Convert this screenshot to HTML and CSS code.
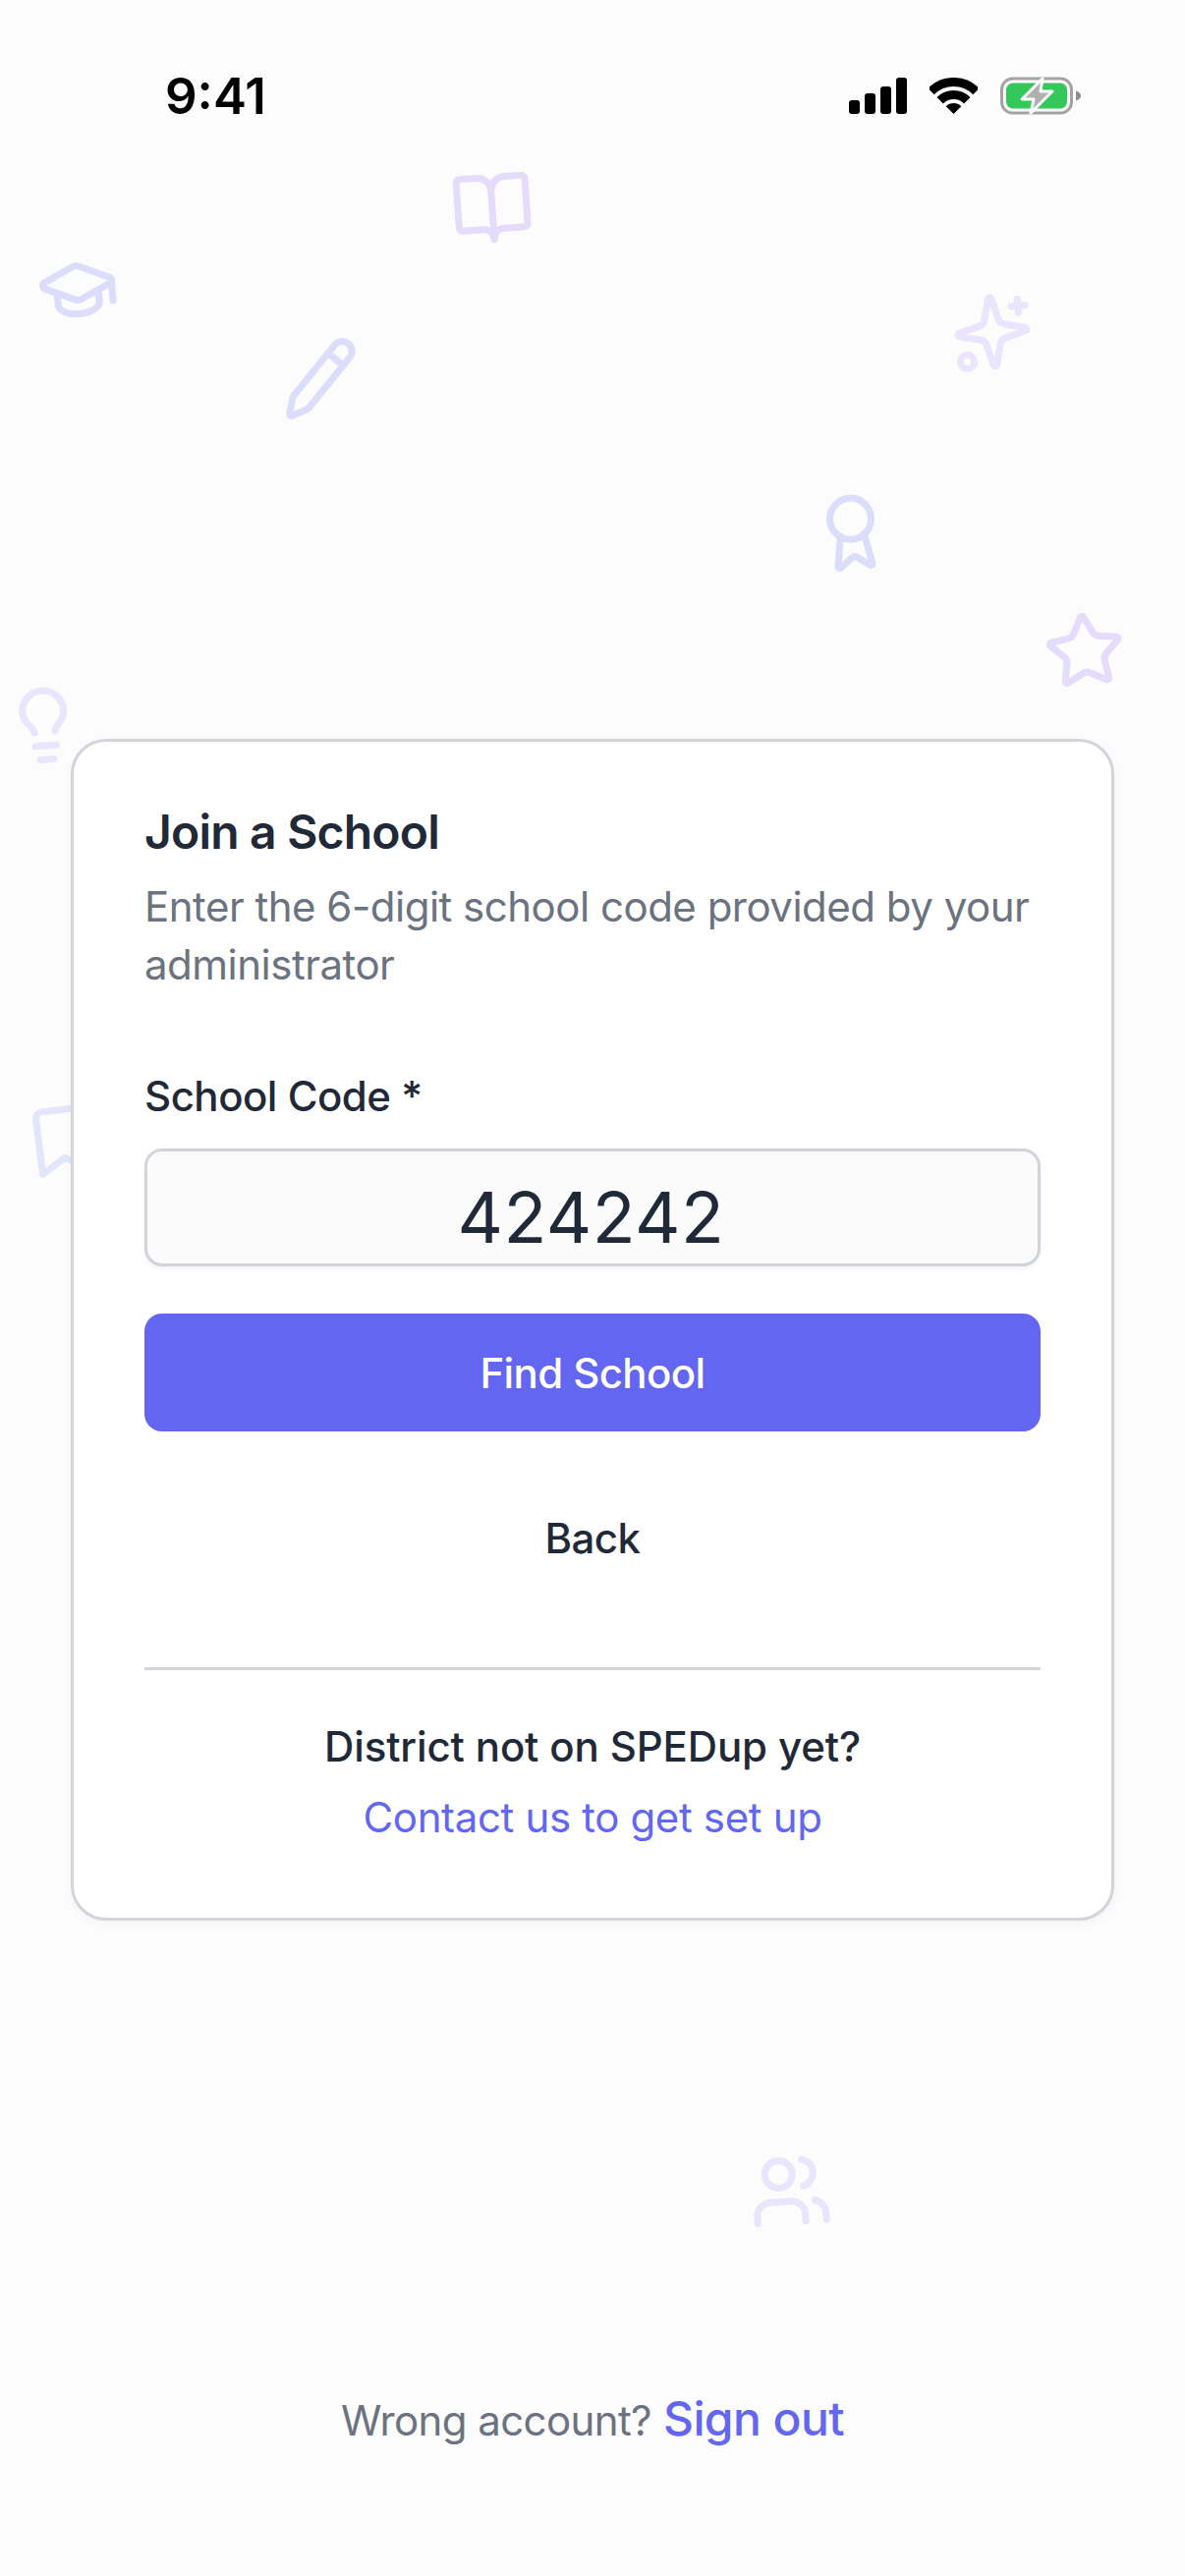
FILE: index.html
```html
<!DOCTYPE html>
<html lang="en">
<head>
    <meta charset="UTF-8">
    <meta name="viewport" content="width=device-width, initial-scale=1.0">
    <title>SPEDup - Join a School</title>
    <link rel="stylesheet" href="styles.css">
</head>
<body>
    <div class="screen">
        <!-- floating background icons -->
        <div class="doodles">
            <svg class="doodle doodle-cap" viewBox="0 0 24 24"><path d="M21.42 10.922a1 1 0 0 0-.019-1.838L12.83 5.18a2 2 0 0 0-1.66 0L2.6 9.08a1 1 0 0 0 0 1.832l8.57 3.908a2 2 0 0 0 1.66 0z"/><path d="M22 10v6"/><path d="M6 12.5V16a6 3 0 0 0 12 0v-3.5"/></svg>
            <svg class="doodle doodle-book" viewBox="0 0 24 24"><path d="M12 7v14"/><path d="M3 18a1 1 0 0 1-1-1V4a1 1 0 0 1 1-1h5a4 4 0 0 1 4 4 4 4 0 0 1 4-4h5a1 1 0 0 1 1 1v13a1 1 0 0 1-1 1h-6a3 3 0 0 0-3 3 3 3 0 0 0-3-3z"/></svg>
            <svg class="doodle doodle-pencil" viewBox="0 0 24 24"><path d="M21.174 6.812a1 1 0 0 0-3.986-3.987L3.842 16.174a2 2 0 0 0-.5.83l-1.321 4.352a.5.5 0 0 0 .623.622l4.353-1.32a2 2 0 0 0 .83-.497z"/><path d="m15 5 4 4"/></svg>
            <svg class="doodle doodle-sparkles" viewBox="0 0 24 24"><path d="M9.937 15.5A2 2 0 0 0 8.5 14.063l-6.135-1.582a.5.5 0 0 1 0-.962L8.5 9.936A2 2 0 0 0 9.937 8.5l1.582-6.135a.5.5 0 0 1 .963 0L14.063 8.5A2 2 0 0 0 15.5 9.937l6.135 1.581a.5.5 0 0 1 0 .964L15.5 14.063a2 2 0 0 0-1.437 1.437l-1.582 6.135a.5.5 0 0 1-.963 0z"/><path d="M20 3v4"/><path d="M22 5h-4"/><circle cx="4" cy="20" r="2"/></svg>
            <svg class="doodle doodle-award" viewBox="0 0 24 24"><path d="m15.477 12.89 1.515 8.526a.5.5 0 0 1-.81.47l-3.58-2.687a1 1 0 0 0-1.197 0l-3.586 2.686a.5.5 0 0 1-.81-.469l1.514-8.526"/><circle cx="12" cy="8" r="6"/></svg>
            <svg class="doodle doodle-star" viewBox="0 0 24 24"><path d="M11.525 2.295a.53.53 0 0 1 .95 0l2.31 4.679a2.123 2.123 0 0 0 1.595 1.16l5.166.756a.53.53 0 0 1 .294.904l-3.736 3.638a2.123 2.123 0 0 0-.611 1.878l.882 5.14a.53.53 0 0 1-.771.56l-4.618-2.428a2.122 2.122 0 0 0-1.973 0L6.396 21.01a.53.53 0 0 1-.77-.56l.881-5.139a2.122 2.122 0 0 0-.611-1.879L2.16 9.795a.53.53 0 0 1 .294-.906l5.165-.755a2.122 2.122 0 0 0 1.597-1.16z"/></svg>
            <svg class="doodle doodle-bulb" viewBox="0 0 24 24"><path d="M15 14c.2-1 .7-1.7 1.5-2.5 1-.9 1.5-2.2 1.5-3.5A6 6 0 0 0 6 8c0 1 .2 2.2 1.5 3.5.7.7 1.3 1.5 1.5 2.5"/><path d="M9 18h6"/><path d="M10 22h4"/></svg>
            <svg class="doodle doodle-bookmark" viewBox="0 0 24 24"><path d="m19 21-7-4-7 4V5a2 2 0 0 1 2-2h10a2 2 0 0 1 2 2v16z"/></svg>
            <svg class="doodle doodle-users" viewBox="0 0 24 24"><path d="M16 21v-2a4 4 0 0 0-4-4H6a4 4 0 0 0-4 4v2"/><circle cx="9" cy="7" r="4"/><path d="M22 21v-2a4 4 0 0 0-3-3.87"/><path d="M16 3.13a4 4 0 0 1 0 7.75"/></svg>
        </div>

        <div class="status-bar">
            <span class="status-time">9:41</span>
            <div class="status-icons">
                <div class="signal">
                    <span class="signal-bar bar-1"></span>
                    <span class="signal-bar bar-2"></span>
                    <span class="signal-bar bar-3"></span>
                    <span class="signal-bar bar-4"></span>
                </div>
                <svg class="wifi" width="49" height="37" viewBox="0 0 49 37">
                    <path class="wifi-arc" d="M1.5 14A32.5 32.5 0 0 1 47.5 14"/>
                    <path class="wifi-arc" d="M10.7 23.2A19.5 19.5 0 0 1 38.3 23.2"/>
                    <path d="M16.7 29.2A11 11 0 0 1 32.3 29.2L24.5 37z"/>
                </svg>
                <svg class="battery" width="82" height="39" viewBox="0 0 82 39">
                    <rect x="1.5" y="2" width="71" height="35" rx="11" fill="none" stroke="#a3a3a3" stroke-width="3"/>
                    <rect x="6" y="6.5" width="62" height="26" rx="7" fill="#34c759"/>
                    <path d="M77 14.5c3 .8 5 2.6 5 5s-2 4.2-5 5z" fill="#8e8e8e"/>
                    <path d="M43 2 22 23H34L31 37 53 15H41z" fill="#b0b0b0" stroke="#fdfdfd" stroke-width="3" stroke-linejoin="round"/>
                </svg>
            </div>
        </div>

        <div class="card">
            <h1 class="card-title">Join a School</h1>
            <p class="card-subtitle">Enter the 6-digit school code provided by your administrator</p>

            <form class="code-form">
                <label class="form-label" for="schoolCode">School Code *</label>
                <input class="code-input" id="schoolCode" type="text" value="424242">
                <button class="btn-primary" type="button">Find School</button>
                <button class="btn-back" type="button">Back</button>
            </form>

            <div class="help-block">
                <p class="help-text">District not on SPEDup yet?</p>
                <a class="help-link" href="#">Contact us to get set up</a>
            </div>
        </div>

        <div class="footer">
            <span class="footer-text">Wrong account?</span>
            <a class="footer-link" href="#">Sign out</a>
        </div>
    </div>
</body>
</html>
```

FILE: styles.css
```css
* {
    margin: 0;
    padding: 0;
    box-sizing: border-box;
}

body {
    font-family: 'Inter', sans-serif;
    background: #fcfcfd;
    color: #1f2937;
}

.screen {
    position: relative;
    width: 1206px;
    height: 2622px;
    overflow: hidden;
    display: flex;
    flex-direction: column;
}

/* background doodles */
.doodles {
    position: absolute;
    inset: 0;
}

.doodle {
    position: absolute;
    width: 84px;
    height: 84px;
    fill: none;
    stroke-width: 2;
    stroke-linecap: round;
    stroke-linejoin: round;
    opacity: 0.2;
}

.doodle-cap { left: 37px; top: 253px; stroke: #6366f1; transform: rotate(-5deg); }
.doodle-book { left: 459px; top: 170px; stroke: #8b5cf6; transform: rotate(-4deg); }
.doodle-pencil { left: 284px; top: 343px; stroke: #6366f1; transform: rotate(-6deg); }
.doodle-sparkles { left: 968px; top: 296px; stroke: #a78bfa; transform: rotate(-5deg); }
.doodle-award { left: 825px; top: 500px; stroke: #6366f1; transform: rotate(-6deg); }
.doodle-star { left: 1062px; top: 620px; stroke: #8b5cf6; transform: rotate(-5deg); }
.doodle-bulb { left: 3px; top: 696px; stroke: #a78bfa; transform: rotate(-5deg); }
.doodle-bookmark { left: 22px; top: 1119px; stroke: #818cf8; transform: rotate(-7deg); }
.doodle-users { left: 762px; top: 2188px; stroke: #a78bfa; transform: rotate(-4deg); }

/* status bar */
.status-bar {
    position: relative;
    display: flex;
    justify-content: space-between;
    align-items: center;
    height: 39px;
    margin-top: 78px;
    padding: 0 106px 0 168px;
}

.status-time {
    font-size: 51px;
    font-weight: 600;
    line-height: 39px;
    color: #000;
}

.status-icons {
    display: flex;
    align-items: center;
    gap: 23px;
}

.signal {
    display: flex;
    align-items: flex-end;
    gap: 5px;
    height: 37px;
}

.signal-bar {
    width: 11px;
    background: #000;
    border-radius: 3px;
}

.bar-1 { height: 14px; }
.bar-2 { height: 21px; }
.bar-3 { height: 28px; }
.bar-4 { height: 37px; }

.wifi-arc {
    fill: none;
    stroke: #000;
    stroke-width: 9;
}

/* card */
.card {
    position: relative;
    margin: 635px 72px 0;
    height: 1203px;
    padding: 64px 72px 0;
    background: #fff;
    border: 3px solid #d1d5db;
    border-radius: 36px;
    box-shadow: 0 3px 9px rgba(0, 0, 0, 0.04);
}

.card-title {
    font-size: 48px;
    font-weight: 600;
    line-height: 56px;
    letter-spacing: -0.8px;
    color: #1f2937;
}

.card-subtitle {
    margin-top: 18px;
    font-size: 42px;
    line-height: 59px;
    letter-spacing: -0.5px;
    color: #6b7280;
}

.code-form {
    display: flex;
    flex-direction: column;
}

.form-label {
    margin-top: 80px;
    font-size: 42px;
    font-weight: 500;
    line-height: 50px;
    letter-spacing: -0.5px;
    color: #1f2937;
}

.code-input {
    height: 120px;
    margin-top: 28px;
    padding: 19px 3px 0 0;
    border: 3px solid #d1d5db;
    border-radius: 18px;
    background: #fbfbfc;
    font-family: inherit;
    font-size: 72px;
    letter-spacing: 0.5px;
    text-align: center;
    color: #1f2937;
    box-shadow: 0 2px 4px rgba(0, 0, 0, 0.05);
}

.btn-primary {
    height: 120px;
    margin-top: 48px;
    border: none;
    border-radius: 18px;
    background: #6366f1;
    font-family: inherit;
    font-size: 42px;
    font-weight: 500;
    letter-spacing: -0.6px;
    color: #fff;
}

.btn-back {
    height: 120px;
    margin-top: 48px;
    border: none;
    background: none;
    font-family: inherit;
    font-size: 42px;
    font-weight: 500;
    letter-spacing: -0.6px;
    color: #1f2937;
}

.help-block {
    margin-top: 72px;
    padding-top: 48px;
    border-top: 3px solid #d1d5db;
    text-align: center;
}

.help-text {
    font-size: 42px;
    font-weight: 500;
    line-height: 60px;
    letter-spacing: -0.13px;
    color: #1f2937;
}

.help-link {
    display: block;
    margin-top: 12px;
    font-size: 42px;
    line-height: 60px;
    letter-spacing: -0.35px;
    color: #6366f1;
    text-decoration: none;
}

/* footer */
.footer {
    position: relative;
    display: flex;
    justify-content: center;
    align-items: baseline;
    gap: 12px;
    margin-top: 477px;
}

.footer-text {
    font-size: 42px;
    letter-spacing: -0.6px;
    color: #6b7280;
}

.footer-link {
    font-size: 48px;
    font-weight: 500;
    letter-spacing: -0.6px;
    color: #6366f1;
    text-decoration: none;
}
```
